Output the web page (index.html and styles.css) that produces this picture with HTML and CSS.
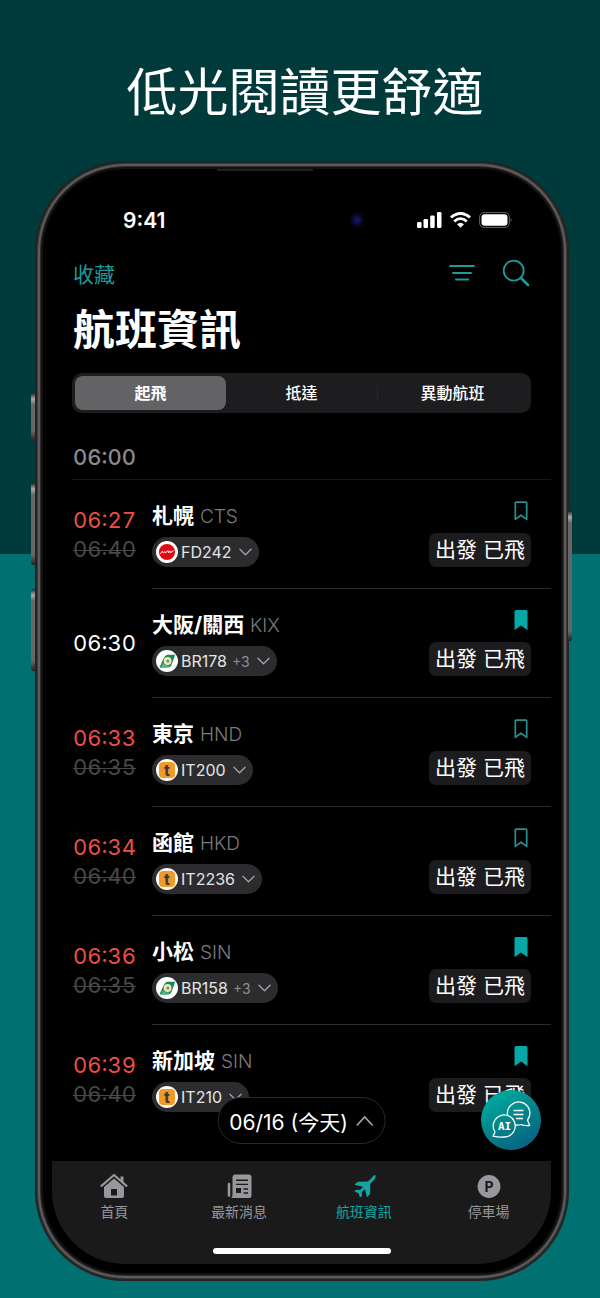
FILE: index.html
```html
<!DOCTYPE html>
<html lang="zh-Hant">
<head>
    <meta charset="UTF-8">
    <meta name="viewport" content="width=device-width, initial-scale=1.0">
    <title>航班資訊</title>
    <link rel="stylesheet" href="styles.css">
</head>
<body>
    <!-- shared icons -->
    <svg class="icon-defs" aria-hidden="true">
        <symbol id="chevron" viewBox="0 0 14 9">
            <path d="M1 1l6 6 6-6" fill="none" stroke="currentColor" stroke-width="1.4" stroke-linecap="round" stroke-linejoin="round"/>
        </symbol>
        <symbol id="bookmark" viewBox="0 0 14 20">
            <path d="M1.3 2q0-.8.8-.8h9.800q.8 0 .8.8v16.400L7 14.200l-5.700 4.200z" fill="none" stroke="currentColor" stroke-width="1.7" stroke-linejoin="round"/>
        </symbol>
        <symbol id="bookmark-fill" viewBox="0 0 14 20">
            <path d="M2 0h10a1.5 1.5 0 0 1 1.5 1.5V19.5q0 .7-.7.3L7 15.5 1.200 19.800Q.5 20.200.5 19.500V1.500A1.500 1.500 0 0 1 2 0z" fill="currentColor"/>
        </symbol>
        <symbol id="airasia" viewBox="0 0 22 22">
            <circle cx="11" cy="11" r="11" fill="#fff"/>
            <circle cx="11" cy="11" r="8" fill="#e00b12"/>
            <path d="M4.500 12.500l2-2.400.8 2 1.600-1.600.6 1.600 2.400-2.600.7 2.400 1.500-1.800.5 1.500 2.500-1.700" fill="none" stroke="#fff" stroke-width="1" stroke-linecap="round" stroke-linejoin="round"/>
        </symbol>
        <symbol id="eva" viewBox="0 0 22 22">
            <circle cx="11" cy="11" r="11" fill="#fff"/>
            <path d="M11 4.800h8.200l-3.600 10q-.9 2.700-3.600 2.700H3.500l3.800-8.500Q8.800 5.500 11 4.800z" fill="#168a52"/>
            <path d="M5 17.500l2-4.500q2.500 3.200 7 2.500-1 2-3 2z" fill="#5bb084"/>
            <circle cx="11.600" cy="11" r="3.900" fill="#efe6c4"/>
            <circle cx="11.800" cy="11" r="1.600" fill="#7d9a4a"/>
        </symbol>
    </svg>

    <h1 class="headline">低光閱讀更舒適</h1>

    <div class="phone">
        <span class="side-key key-action"></span>
        <span class="side-key key-up"></span>
        <span class="side-key key-down"></span>
        <span class="side-key key-power"></span>
        <span class="speaker"></span>

        <div class="screen">
            <div class="status-bar">
                <span class="clock">9:41</span>
                <span class="camera"></span>
                <div class="status-icons">
                    <svg width="25" height="16" viewBox="0 0 25 16" fill="#fff" aria-hidden="true">
                        <rect x="0" y="10" width="4.500" height="6" rx="1.200"/>
                        <rect x="6.500" y="7" width="4.500" height="9" rx="1.200"/>
                        <rect x="13.200" y="3.500" width="4.500" height="12.500" rx="1.200"/>
                        <rect x="20" y="0" width="4.500" height="16" rx="1.200"/>
                    </svg>
                    <svg width="21" height="16" viewBox="0 0 21 16" aria-hidden="true">
                        <g fill="none" stroke="#fff" stroke-width="2.800">
                            <path d="M1 5.600Q5.200 1.500 10.500 1.500T20 5.600"/>
                            <path d="M4.300 9.400Q7 6.700 10.500 6.700t6.200 2.700"/>
                        </g>
                        <path d="M10.500 15.800L7 12.200q3.500-3 7 0z" fill="#fff"/>
                    </svg>
                    <svg width="33" height="16" viewBox="0 0 33 16" aria-hidden="true">
                        <rect x=".6" y=".6" width="29.800" height="14.800" rx="4.500" fill="none" stroke="#666" stroke-width="1"/>
                        <rect x="2.500" y="2.200" width="26" height="11.600" rx="3.200" fill="#fff"/>
                        <path d="M31.800 5.800q1.500 2.200 0 4.400z" fill="#777"/>
                    </svg>
                </div>
            </div>

            <div class="toolbar">
                <a class="saved-link" href="#">收藏</a>
                <div class="toolbar-actions">
                    <button class="icon-button" type="button" aria-label="篩選">
                        <svg width="28" height="28" viewBox="0 0 28 28" fill="none" stroke="currentColor" stroke-width="2" stroke-linecap="round">
                            <path d="M2 7h24M5 14h18M8 20.500h12"/>
                        </svg>
                    </button>
                    <button class="icon-button" type="button" aria-label="搜尋">
                        <svg width="28" height="28" viewBox="0 0 28 28" fill="none" stroke="currentColor" stroke-width="1.800" stroke-linecap="round">
                            <circle cx="11.700" cy="11.600" r="10"/>
                            <path d="M19 19l7 7" stroke-width="2.600"/>
                        </svg>
                    </button>
                </div>
            </div>

            <h2 class="page-title">航班資訊</h2>

            <div class="segments">
                <button class="segment active" type="button">起飛</button>
                <button class="segment" type="button">抵達</button>
                <button class="segment divided" type="button">異動航班</button>
            </div>

            <div class="list">
                <h3 class="hour">06:00</h3>

                <div class="flight">
                    <div class="times">
                        <span class="time changed">06:27</span>
                        <del class="time">06:40</del>
                    </div>
                    <div class="details">
                        <div>
                            <div class="city"><b>札幌</b> <span class="code">CTS</span></div>
                            <button class="flight-no" type="button"><svg class="airline"><use href="#airasia"/></svg>FD242<svg class="chevron"><use href="#chevron"/></svg></button>
                        </div>
                        <div class="state">
                            <button class="save" type="button" aria-label="收藏"><svg><use href="#bookmark"/></svg></button>
                            <span class="status">出發 已飛</span>
                        </div>
                    </div>
                </div>

                <div class="flight">
                    <div class="times">
                        <span class="time">06:30</span>
                    </div>
                    <div class="details">
                        <div>
                            <div class="city"><b>大阪/關西</b> <span class="code">KIX</span></div>
                            <button class="flight-no" type="button"><svg class="airline"><use href="#eva"/></svg>BR178<small>+3</small><svg class="chevron"><use href="#chevron"/></svg></button>
                        </div>
                        <div class="state">
                            <button class="save saved" type="button" aria-label="取消收藏"><svg><use href="#bookmark-fill"/></svg></button>
                            <span class="status">出發 已飛</span>
                        </div>
                    </div>
                </div>

                <div class="flight">
                    <div class="times">
                        <span class="time changed">06:33</span>
                        <del class="time">06:35</del>
                    </div>
                    <div class="details">
                        <div>
                            <div class="city"><b>東京</b> <span class="code">HND</span></div>
                            <button class="flight-no" type="button"><span class="airline tiger"><b>t</b></span>IT200<svg class="chevron"><use href="#chevron"/></svg></button>
                        </div>
                        <div class="state">
                            <button class="save" type="button" aria-label="收藏"><svg><use href="#bookmark"/></svg></button>
                            <span class="status">出發 已飛</span>
                        </div>
                    </div>
                </div>

                <div class="flight">
                    <div class="times">
                        <span class="time changed">06:34</span>
                        <del class="time">06:40</del>
                    </div>
                    <div class="details">
                        <div>
                            <div class="city"><b>函館</b> <span class="code">HKD</span></div>
                            <button class="flight-no" type="button"><span class="airline tiger"><b>t</b></span>IT2236<svg class="chevron"><use href="#chevron"/></svg></button>
                        </div>
                        <div class="state">
                            <button class="save" type="button" aria-label="收藏"><svg><use href="#bookmark"/></svg></button>
                            <span class="status">出發 已飛</span>
                        </div>
                    </div>
                </div>

                <div class="flight">
                    <div class="times">
                        <span class="time changed">06:36</span>
                        <del class="time">06:35</del>
                    </div>
                    <div class="details">
                        <div>
                            <div class="city"><b>小松</b> <span class="code">SIN</span></div>
                            <button class="flight-no" type="button"><svg class="airline"><use href="#eva"/></svg>BR158<small>+3</small><svg class="chevron"><use href="#chevron"/></svg></button>
                        </div>
                        <div class="state">
                            <button class="save saved" type="button" aria-label="取消收藏"><svg><use href="#bookmark-fill"/></svg></button>
                            <span class="status">出發 已飛</span>
                        </div>
                    </div>
                </div>

                <div class="flight">
                    <div class="times">
                        <span class="time changed">06:39</span>
                        <del class="time">06:40</del>
                    </div>
                    <div class="details">
                        <div>
                            <div class="city"><b>新加坡</b> <span class="code">SIN</span></div>
                            <button class="flight-no" type="button"><span class="airline tiger"><b>t</b></span>IT210<svg class="chevron"><use href="#chevron"/></svg></button>
                        </div>
                        <div class="state">
                            <button class="save saved" type="button" aria-label="取消收藏"><svg><use href="#bookmark-fill"/></svg></button>
                            <span class="status">出發 已飛</span>
                        </div>
                    </div>
                </div>

                <button class="date-picker" type="button">06/16 (今天)
                    <svg width="18" height="12" viewBox="0 0 18 12" fill="none" stroke="#aaa" stroke-width="1.600" stroke-linecap="round"><path d="M1.500 10L9 2l7.500 8"/></svg>
                </button>
                <button class="assistant" type="button" aria-label="AI 助理">
                    <svg width="60" height="60" viewBox="0 0 60 60" fill="none" stroke="#fff" stroke-width="1.300" stroke-linecap="round" stroke-linejoin="round">
                        <path d="M26.500 24.500a11.200 11.200 0 1 1 20 5.500l2.200 5.500q-5 .6-8.700-1-3 .9-5.500.4"/>
                        <path d="M33 20.500h9M33 24.500h9M35.500 28.500h6"/>
                        <path d="M14 42a11 11 0 1 1 9 5q-5.500.4-11-.8z"/>
                        <text x="23.500" y="40" text-anchor="middle" class="ai-letters">AI</text>
                    </svg>
                </button>
            </div>

            <nav class="tabs">
                <a class="tab" href="#">
                    <svg width="28" height="26" viewBox="0 0 28 26">
                        <path d="M1.500 12.800L14 2l12.500 10.800" fill="none" stroke="currentColor" stroke-width="2.200" stroke-linecap="round" stroke-linejoin="round"/>
                        <path d="M20.500 3.500h3v6l-3-2.600z" fill="currentColor"/>
                        <path fill-rule="evenodd" d="M14 5.500l10 8.600V23a2 2 0 0 1-2 2H6a2 2 0 0 1-2-2v-8.900zM11 16v6.500h6V16z" fill="currentColor"/>
                    </svg>
                    首頁
                </a>
                <a class="tab" href="#">
                    <svg width="28" height="26" viewBox="0 0 28 26">
                        <path d="M4 11v11.500" stroke="currentColor" stroke-width="2.600" stroke-linecap="round"/>
                        <path d="M10.500 1.500H24A2.500 2.500 0 0 1 26.500 4v18.500A2.500 2.500 0 0 1 24 25H6q1.500-1 1.500-3V4.500a3 3 0 0 1 3-3z" fill="currentColor"/>
                        <path d="M11 7.200h12M11 11.400h12M18.500 16h4.500M18.500 20h4.500" stroke="#1a1a1b" stroke-width="1.400"/>
                        <path d="M11 15h5v5h-5z" fill="#1a1a1b"/>
                    </svg>
                    最新消息
                </a>
                <a class="tab current" href="#">
                    <svg width="28" height="26" viewBox="0 0 28 26" fill="currentColor">
                        <path d="M25.200 2.300c1 .9.400 3-1.200 4.600l-3.700 3.900-.2 10-2.500 3q-.6.500-.9-.3l-1.700-7.600-3.200 3 .2 3.800-1.400 1.400q-.5.300-.7-.2l-1.400-3.600-3.600-1.500q-.6-.4-.1-.8l1.400-1.300 3.900.2 3-3.200-7.900-1.700q-.8-.2-.3-.8l2.800-2.400 10.200-.2 3.700-3.700c1.600-1.700 2.800-3.600 3.600-2.600z"/>
                    </svg>
                    航班資訊
                </a>
                <a class="tab" href="#">
                    <svg width="28" height="26" viewBox="0 0 28 26">
                        <circle cx="14" cy="13.500" r="11.400" fill="currentColor"/>
                        <text x="14" y="18.500" text-anchor="middle" class="parking-letter">P</text>
                    </svg>
                    停車場
                </a>
            </nav>
            <div class="home-area"><div class="home-indicator"></div></div>
        </div>
    </div>
</body>
</html>
```

FILE: styles.css
```css
* {
    box-sizing: border-box;
}

body {
    margin: 0;
    padding: 1px 31px 17px 35px;
    background: linear-gradient(#003a3b 554px, #007071 554px);
    color: #fff;
    font-family: Inter, "Noto Sans CJK TC", sans-serif;
}

button {
    margin: 0;
    padding: 0;
    border: 0;
    background: none;
    color: inherit;
    font: inherit;
    cursor: pointer;
}

a {
    text-decoration: none;
}

h1, h2, h3 {
    margin: 0;
}

.icon-defs {
    position: absolute;
    width: 0;
    height: 0;
}

.headline {
    padding: 56px 0 32px 6px;
    font-size: 51px;
    font-weight: 400;
    line-height: 72px;
    text-align: center;
}

/* device */
.phone {
    position: relative;
    padding: 15px 16px 15px 15px;
    border: 2px solid #242323;
    border-radius: 90px;
    background: #000;
    box-shadow: inset 0 0 0 1px #3d3b3b, inset 0 0 0 3px #5c5a5a, inset 0 0 0 4px #2e2c2c, inset 0 0 0 6px #121212;
}

.side-key {
    position: absolute;
    left: -6px;
    width: 4px;
    border-radius: 2px 0 0 2px;
    background: linear-gradient(#222, #aaa 6px, #666 12px, #666 calc(100% - 10px), #222);
}

.key-action {
    top: 230px;
    height: 48px;
}

.key-up {
    top: 320px;
    height: 82px;
}

.key-down {
    top: 426px;
    height: 82px;
}

.key-power {
    top: 348px;
    right: -5px;
    left: auto;
    height: 130px;
    border-radius: 0 2px 2px 0;
}

.speaker {
    position: absolute;
    top: 6px;
    left: 34%;
    width: 18%;
    height: 2px;
    background: #222;
}

.screen {
    border-radius: 73px;
    background: #000;
    overflow: hidden;
}

.status-bar {
    display: flex;
    align-items: center;
    justify-content: space-between;
    height: 68px;
    padding: 16px 39px 0 71px;
}

.clock {
    font-size: 21px;
    font-weight: 600;
}

.camera {
    width: 14px;
    height: 14px;
    margin-left: 132px;
    border-radius: 50%;
    background: radial-gradient(#15155a 15%, #07072a 50%, #020208);
}

.status-icons {
    display: flex;
    gap: 8px;
}

.toolbar {
    display: flex;
    align-items: center;
    justify-content: space-between;
    height: 54px;
    padding: 0 21px;
}

.saved-link {
    color: #1f9a98;
    font-size: 21px;
}

.toolbar-actions {
    display: flex;
    gap: 26px;
}

.icon-button {
    display: flex;
    color: #1f9a98;
}

.page-title {
    padding-left: 21px;
    font-size: 42px;
    font-weight: 700;
    line-height: 60px;
}

.segments {
    display: flex;
    height: 40px;
    margin: 13px 20px 0;
    padding: 3px;
    border-radius: 10px;
    background: #1d1d1f;
}

.segment {
    flex: 1;
    border-radius: 8px;
    font-size: 16px;
    font-weight: 500;
    line-height: 32px;
}

.segment.active {
    background: #636366;
    font-weight: 700;
}

.segment.divided {
    background: linear-gradient(#29292b, #29292b) left center / 1px 14px no-repeat;
}

/* flights */
.list {
    position: relative;
    padding-bottom: 27px;
}

.hour {
    margin-left: 20px;
    padding: 28px 0 6px 1px;
    border-bottom: 1px solid #171718;
    color: #8a8a8e;
    font-size: 22px;
    font-weight: 500;
    font-variant-numeric: tabular-nums;
    line-height: 32px;
}

.flight {
    display: flex;
    padding-left: 21px;
}

.times {
    display: flex;
    flex: none;
    flex-direction: column;
    align-items: flex-start;
    justify-content: center;
    width: 79px;
}

.time {
    font-size: 22px;
    font-variant-numeric: tabular-nums;
    line-height: 29px;
}

.changed {
    color: #ed4f47;
}

del.time {
    color: #48484a;
    text-decoration-thickness: 1px;
}

.details {
    display: flex;
    flex: 1;
    justify-content: space-between;
    padding: 21px 20px 21px 0;
    border-bottom: 1px solid #2b2b2d;
}

.flight:nth-last-of-type(1) .details {
    border-bottom-color: transparent;
}

.city {
    margin-bottom: 6px;
    font-size: 21px;
    line-height: 30px;
    white-space: nowrap;
}

.code {
    color: #7b7b7f;
    font-size: 19px;
    font-weight: 300;
    line-height: 20px;
}

.flight-no {
    display: flex;
    align-items: center;
    height: 30px;
    padding: 0 7px 0 4px;
    border-radius: 15px;
    background: #2c2c2e;
    color: #e4e4e6;
    font-size: 16px;
}

.flight-no small {
    margin-left: 5px;
    color: #8e8e93;
    font-size: 14px;
}

.airline {
    width: 22px;
    height: 22px;
    margin-right: 3px;
}

.chevron {
    width: 13px;
    height: 9px;
    margin-left: 7px;
    color: #a5a5a9;
}

.tiger {
    padding: 3px;
    border-radius: 50%;
    background: #fffaf0;
}

.tiger b {
    display: block;
    border-radius: 4px;
    background: #f09a2c;
    color: #3e3930;
    font-family: Roboto, sans-serif;
    font-size: 17px;
    line-height: 16px;
}

.state {
    display: flex;
    flex-direction: column;
    align-items: flex-end;
    gap: 12px;
}

.save {
    display: flex;
    margin-right: 3px;
    color: #2b8f8e;
}

.save svg {
    width: 14px;
    height: 20px;
}

.saved {
    color: #06a7a7;
}

.status {
    padding: 0 6px;
    border-radius: 7px;
    background: #1c1c1e;
    font-size: 21px;
    line-height: 34px;
    white-space: nowrap;
}

.date-picker {
    position: absolute;
    bottom: 17px;
    left: 50%;
    display: flex;
    align-items: center;
    gap: 8px;
    height: 47px;
    padding: 0 11px;
    border: 1px solid #29292b;
    border-radius: 24px;
    background: #000;
    font-size: 21px;
    white-space: nowrap;
    transform: translateX(-50%);
}

.assistant {
    position: absolute;
    right: 10px;
    bottom: 11px;
    width: 60px;
    height: 60px;
    border-radius: 50%;
    background: linear-gradient(150deg, #00a79b 15%, #047f87 55%, #065a84);
}

.ai-letters {
    fill: #fff;
    stroke: none;
    font: 700 11px "DejaVu Sans Mono", monospace;
}

/* bottom tabs */
.tabs {
    display: flex;
    height: 87px;
    background: #1a1a1b;
}

.tab {
    display: flex;
    flex: 1;
    flex-direction: column;
    align-items: center;
    gap: 3px;
    padding-top: 12px;
    color: #98989c;
    font-size: 14px;
    line-height: 20px;
}

.tab.current {
    color: #12a5a3;
}

.parking-letter {
    fill: #1a1a1b;
    font: 700 14px Inter, sans-serif;
}

.home-area {
    height: 16px;
    background: #1a1a1b;
}

.home-indicator {
    width: 178px;
    height: 6px;
    margin: 0 auto;
    border-radius: 3px;
    background: #fff;
}
```
